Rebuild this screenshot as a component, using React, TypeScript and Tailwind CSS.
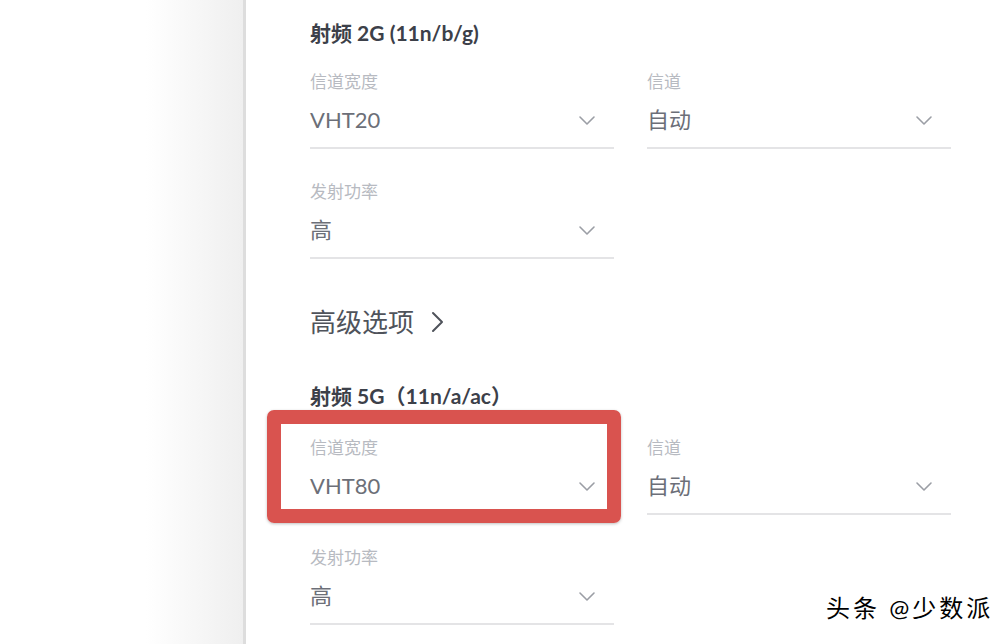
import React from "react";

const font = { fontFamily: 'Lato, "Noto Sans CJK SC", sans-serif' };

function Chevron() {
  return (
    <svg width="18" height="12" viewBox="0 0 18 12" className="text-[#9b9ea5]">
      <path d="M2 3l7 7 7-7" fill="none" stroke="currentColor" strokeWidth="1.6" strokeLinecap="round" strokeLinejoin="round" />
    </svg>
  );
}

function Field({ label, value, highlight }: { label: string; value: string; highlight?: boolean }) {
  return (
    <div className="relative w-[304px]">
      {highlight && (
        <div className="absolute left-[-43px] right-[-7px] top-[-27px] bottom-[-8px] border-[14px] border-[#d9534f] rounded-[7px] shadow-[0_1px_3px_rgba(0,0,0,0.25)]" />
      )}
      <div className="h-[22px] text-[17px] leading-[22px] text-[#b7bac1]">{label}</div>
      <div className="mt-[13px] h-[28px] flex items-center justify-between pr-[18px]">
        <span className="text-[22px] leading-[28px] text-[#6c6f78]">{value}</span>
        <Chevron />
      </div>
      <div className="mt-[13px] h-[2px] bg-[#e4e4e6]" />
    </div>
  );
}

export default function App() {
  return (
    <div className="relative w-[1008px] h-[644px] overflow-hidden bg-white flex" style={font}>
      <div className="w-[246px] h-full shrink-0 bg-gradient-to-r from-white from-60% to-[#efefef] border-r-[3px] border-[#dddddd]" />
      <div className="pl-[64px] pt-[19px]">
        <h3 className="text-[21px] leading-[28px] font-bold text-[#3c4049]">射频 2G (11n/b/g)</h3>
        <div className="mt-[24px] flex gap-[33px]">
          <Field label="信道宽度" value="VHT20" />
          <Field label="信道" value="自动" />
        </div>
        <div className="mt-[32px]">
          <Field label="发射功率" value="高" />
        </div>
        <div className="mt-[46px] flex items-center gap-[16px] h-[34px]">
          <span className="text-[26px] leading-[34px] text-[#4f535b]">高级选项</span>
          <svg width="14" height="24" viewBox="0 0 14 24" className="text-[#4f535b]">
            <path d="M3 3l9 9-9 9" fill="none" stroke="currentColor" strokeWidth="2" strokeLinecap="round" strokeLinejoin="round" />
          </svg>
        </div>
        <h3 className="mt-[43px] text-[21px] leading-[28px] font-bold text-[#3c4049]">射频 5G（11n/a/ac）</h3>
        <div className="mt-[27px] flex gap-[33px]">
          <Field label="信道宽度" value="VHT80" highlight />
          <Field label="信道" value="自动" />
        </div>
        <div className="mt-[32px]">
          <Field label="发射功率" value="高" />
        </div>
      </div>
      <div
        className="absolute left-[826px] top-[592px] text-[24px] leading-[32px] text-black tracking-[3px]"
        style={{ textShadow: "1px 1px 0 #fff, -1px -1px 0 #fff, 1px -1px 0 #fff, -1px 1px 0 #fff" }}
      >
        头条 @少数派
      </div>
    </div>
  );
}
